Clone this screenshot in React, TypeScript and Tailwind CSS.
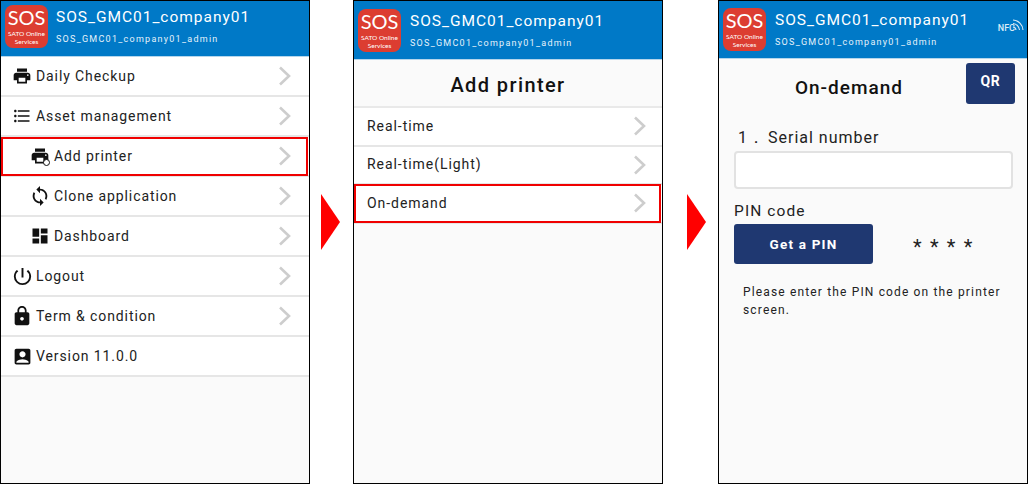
import React from "react";
import {
  MdPrint,
  MdFormatListBulleted,
  MdSync,
  MdDashboard,
  MdPowerSettingsNew,
  MdLock,
  MdAccountBox,
} from "react-icons/md";

const font = "font-['Roboto',sans-serif]";

function Chevron() {
  return (
    <svg width="14" height="20" viewBox="0 0 14 20" className="shrink-0" fill="none">
      <path d="M2 1.5 L11 10 L2 18.5" stroke="#cdcdcd" strokeWidth="2.6" />
    </svg>
  );
}

function Logo() {
  return (
    <div className="w-[43px] h-[43px] rounded-[8px] bg-[#dc3d31] flex flex-col items-center text-white font-['Lato',sans-serif] shrink-0 overflow-hidden">
      <span className="text-[20px] leading-[19px] mt-[3px]">SOS</span>
      <span className="text-[6.5px] leading-[7.5px] mt-[3px] whitespace-nowrap">SATO Online</span>
      <span className="text-[6.5px] leading-[7.5px]">Services</span>
    </div>
  );
}

function Header({ h, pt, nfc, gap }: { h: string; pt: string; nfc?: boolean; gap: string }) {
  return (
    <div className={`relative ${h} ${pt} ${gap} bg-[#0079c7] flex items-start pl-[4px] border-b border-[#b5d6ec] shrink-0`}>
      <Logo />
      <div className="flex flex-col text-white">
        <span className="text-[15.5px] leading-[19px] tracking-[0.97px] mt-[3px] whitespace-nowrap">SOS_GMC01_company01</span>
        <span className="text-[9px] leading-[11px] tracking-[1.26px] mt-[7px] whitespace-nowrap text-[#e6f2fa]">SOS_GMC01_company01_admin</span>
      </div>
      {nfc && (
        <div className="absolute right-[3px] top-[17px] flex items-end text-[#dcecf7]">
          <span className="text-[9px] leading-[11px] font-medium">NFC</span>
          <svg width="12" height="13" viewBox="0 0 12 13" fill="none" stroke="currentColor" strokeWidth="1.1" className="-ml-[3px] mb-[3px]">
            <path d="M1 9 A3.5 3.5 0 0 1 4 12" />
            <path d="M1 5.5 A7 7 0 0 1 7.5 12" />
            <path d="M1 2 A10.5 10.5 0 0 1 11 12" />
          </svg>
        </div>
      )}
    </div>
  );
}

function AddPrinterIcon() {
  return (
    <span className="relative w-[18px] h-[18px] block">
      <MdPrint size={20} className="absolute -left-[1px] -top-[1px]" />
      <span className="absolute -right-[1px] -bottom-[1px] w-[7px] h-[7px] rounded-full bg-white border-[1.5px] border-[#111]" />
    </span>
  );
}

type Item = { label: string; icon: React.ReactNode; indent?: boolean; chevron?: boolean; hi?: boolean };

const menu: Item[] = [
  { label: "Daily Checkup", icon: <MdPrint size={20} className="shrink-0" />, chevron: true },
  { label: "Asset management", icon: <MdFormatListBulleted size={20} className="shrink-0" />, chevron: true },
  { label: "Add printer", icon: <AddPrinterIcon />, indent: true, chevron: true, hi: true },
  { label: "Clone application", icon: <MdSync size={22} className="shrink-0" />, indent: true, chevron: true },
  { label: "Dashboard", icon: <MdDashboard size={20} className="shrink-0" />, indent: true, chevron: true },
  { label: "Logout", icon: <MdPowerSettingsNew size={23} className="shrink-0" />, chevron: true },
  { label: "Term & condition", icon: <MdLock size={22} className="shrink-0" />, chevron: true },
  { label: "Version 11.0.0", icon: <MdAccountBox size={21} className="shrink-0" /> },
];

function Highlight({ cls }: { cls: string }) {
  return <div className={`absolute border-[2px] border-[#f00000] ${cls}`} />;
}

function Arrow() {
  return <div className="w-[19px] h-[56px] bg-[#ff0000] [clip-path:polygon(0_0,100%_50%,0_100%)]" />;
}

function Panel({ children }: { children: React.ReactNode }) {
  return (
    <div className="w-[310px] h-[484px] border border-black bg-[#fafafa] flex flex-col shrink-0 overflow-hidden">
      {children}
    </div>
  );
}

function Panel1() {
  return (
    <Panel>
      <Header h="h-[56px]" pt="pt-[4px]" gap="gap-[8px]" />
      <div className="flex flex-col">
        {menu.map((m) => (
          <div
            key={m.label}
            className={`relative h-[40px] bg-white border-b-[2px] border-[#e6e6e6] flex items-center pr-[17px] ${m.indent ? "pl-[29px]" : "pl-[11px]"}`}
          >
            <span className="w-[20px] h-[20px] flex items-center justify-center text-[#111] shrink-0">{m.icon}</span>
            <span className="ml-[4px] flex-1 text-[14px] tracking-[0.9px] text-[#222] leading-none">{m.label}</span>
            {m.chevron && <Chevron />}
            {m.hi && <Highlight cls="left-0 right-[1px] top-0 bottom-[-1px]" />}
          </div>
        ))}
      </div>
    </Panel>
  );
}

function Panel2() {
  const rows = [
    { t: "Real-time" },
    { t: "Real-time(Light)" },
    { t: "On-demand", hi: true },
  ];
  return (
    <Panel>
      <Header h="h-[59px]" pt="pt-[8px]" gap="gap-[9px]" />
      <div className="h-[48px] pt-[4px] flex items-center justify-center text-[20px] font-medium tracking-[1.4px] text-[#111] border-b-[2px] border-[#e9e9e9] shrink-0">
        Add printer
      </div>
      {rows.map((r) => (
        <div key={r.t} className="relative h-[38.5px] bg-white border-b-[2px] border-[#e6e6e6] flex items-center pl-[13px] pr-[15px]">
          <span className="flex-1 text-[14px] tracking-[0.95px] text-[#222]">{r.t}</span>
          <Chevron />
          {r.hi && <Highlight cls="left-0 right-[1px] top-[-1px] bottom-[-1px]" />}
        </div>
      ))}
    </Panel>
  );
}

function Panel3() {
  return (
    <Panel>
      <Header h="h-[58px]" pt="pt-[7px]" gap="gap-[9px]" nfc />
      <div className="relative flex-1 px-[15px]">
        <div className="flex items-start">
          <div className="flex-1 text-center text-[19px] font-medium tracking-[1px] text-[#111] mt-[17px] leading-[24px] pr-[2px]">On-demand</div>
          <button className="w-[49px] h-[41px] mt-[4px] mr-[-3px] rounded-[3px] bg-[#1f3871] text-white text-[14px] font-bold tracking-[0.6px] pb-[4px]">QR</button>
        </div>
        <div className="text-[16px] tracking-[1px] text-[#222] mt-[24px] leading-[20px] flex">
          <span className="w-[34px] pl-[4px]">1．</span>
          <span>Serial number</span>
        </div>
        <div className="h-[38px] w-[279px] bg-white border-[2px] border-[#e2e2e2] rounded-[4px] mt-[3px]" />
        <div className="text-[15.5px] tracking-[1.1px] text-[#222] mt-[13px] leading-[19px]">PIN code</div>
        <div className="flex items-start mt-[3px]">
          <button className="w-[139px] h-[40px] rounded-[3px] bg-[#1f3871] text-white text-[13.5px] font-bold tracking-[1.2px]">Get a PIN</button>
          <span className="ml-[40px] mt-[9px] text-[20px] leading-[28px] tracking-[8.3px] text-[#222]">****</span>
        </div>
        <p className="mt-[20px] ml-[9px] mr-[5px] text-[12px] tracking-[1.15px] leading-[17.5px] text-[#222]">
          Please enter the PIN code on the printer screen.
        </p>
      </div>
    </Panel>
  );
}

export default function App() {
  return (
    <div className={`${font} w-[1028px] h-[484px] bg-white flex`}>
      <Panel1 />
      <div className="w-[43px] h-[484px] pl-[11px] pt-[194px]"><Arrow /></div>
      <Panel2 />
      <div className="w-[55px] h-[484px] pl-[24px] pt-[194px]"><Arrow /></div>
      <Panel3 />
    </div>
  );
}
